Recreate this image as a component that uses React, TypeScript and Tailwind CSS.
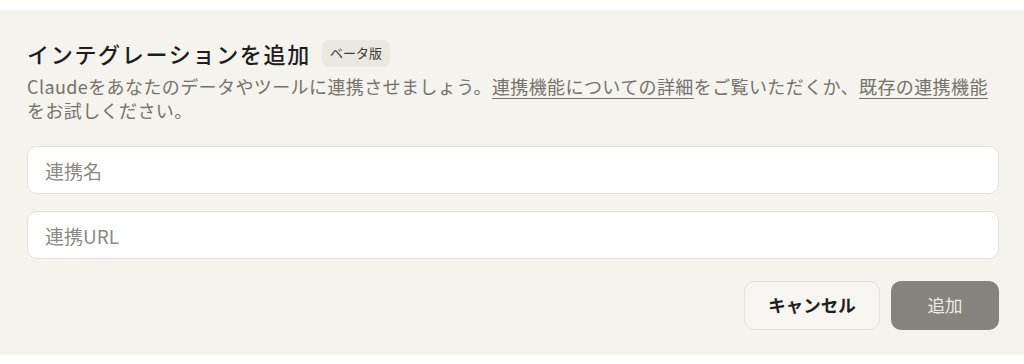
export default function App() {
  return (
    <div
      className="w-[1024px] h-[364px] bg-white pt-[10px]"
      style={{ fontFamily: '"Noto Sans CJK JP", "Inter", sans-serif' }}
    >
      <div className="bg-[#f4f3ee] h-[345px] pl-[27px] pr-[25px] pt-[29px]">
        {/* Header */}
        <div className="flex items-center gap-[11px] h-[28px]">
          <h2 className="text-[22px] leading-[28px] font-medium text-[#1f1e1d] tracking-[1.7px]">
            インテグレーションを追加
          </h2>
          <span className="h-[27px] flex items-center bg-[#eae8e1] text-[#3d3d3a] text-[13px] px-[8px] rounded-[7px]">
            ベータ版
          </span>
        </div>
        <p className="mt-[7px] pr-[8px] text-[18px] leading-[24px] text-[#73726c] tracking-[0.4px]">
          Claudeをあなたのデータやツールに連携させましょう。
          <a className="underline underline-offset-[4px] decoration-1">連携機能についての詳細</a>
          をご覧いただくか、
          <a className="underline underline-offset-[4px] decoration-1">既存の連携機能</a>
          をお試しください。
        </p>

        {/* Inputs */}
        <div className="mt-[24px] flex flex-col gap-[17px]">
          <input
            placeholder="連携名"
            className="h-[48px] w-full bg-white border border-[#e3e1da] rounded-[10px] px-[17px] text-[19px] placeholder:text-[#8a8983] outline-none"
          />
          <input
            placeholder="連携URL"
            className="h-[48px] w-full bg-white border border-[#e3e1da] rounded-[10px] px-[17px] text-[19px] placeholder:text-[#8a8983] outline-none"
          />
        </div>

        {/* Actions */}
        <div className="mt-[22px] flex justify-end gap-[11px]">
          <button className="h-[49px] w-[136px] rounded-[10px] border border-[#e3e1da] bg-[#f6f5f1] text-[17.5px] font-bold text-[#1f1e1d]">
            キャンセル
          </button>
          <button className="h-[49px] w-[108px] rounded-[10px] bg-[#84837d] text-[17.5px] text-[#ecebe6]">
            追加
          </button>
        </div>
      </div>
    </div>
  );
}
